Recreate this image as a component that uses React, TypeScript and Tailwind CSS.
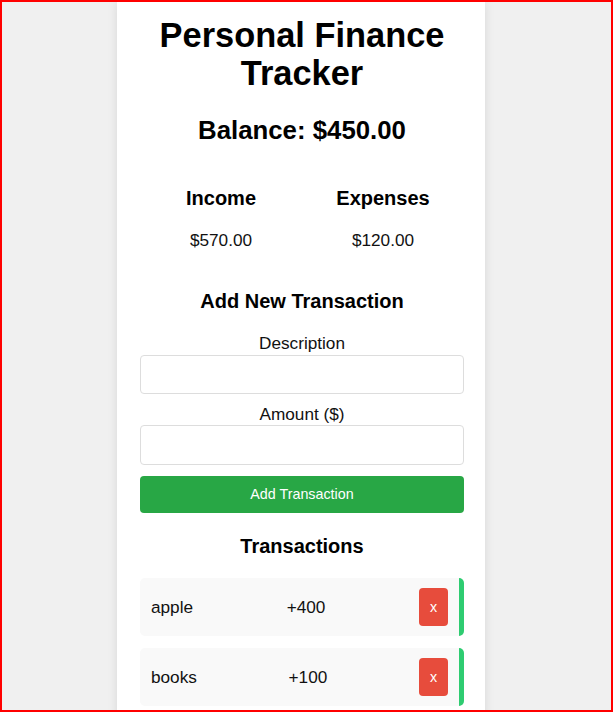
const transactions = [
  { id: 1, text: 'apple', amount: 400 },
  { id: 2, text: 'books', amount: 100 },
];

export default function App() {
  return (
    <div className="h-[712px] w-full overflow-hidden border-2 border-[#ff0000] bg-[#f0f0f0] font-['Liberation_Sans',Arial,sans-serif] text-[#111]">
      <div className="flex pl-[115px]">
        <div className="w-[368px] bg-white pt-[13.75px] pb-[20px] pl-[23px] pr-[21px] shadow-[0_0_10px_rgba(0,0,0,0.1)]">
          <h1 className="text-center text-[34.4px] leading-[38.5px] font-bold text-black">
            Personal Finance Tracker
          </h1>
          <h2 className="mt-[22.75px] text-center text-[25.8px] leading-[29.6px] font-bold text-black">
            Balance: $450.00
          </h2>

          <div className="mt-[42px] grid grid-cols-2 text-center">
            <div>
              <h3 className="text-[20px] leading-[23px] font-bold text-black">Income</h3>
              <p className="mt-[20.5px] text-[17.2px] leading-[19.8px]">$570.00</p>
            </div>
            <div>
              <h3 className="text-[20px] leading-[23px] font-bold text-black">Expenses</h3>
              <p className="mt-[20.5px] text-[17.2px] leading-[19.8px]">$120.00</p>
            </div>
          </div>

          <h3 className="mt-[40px] text-center text-[20px] leading-[23px] font-bold text-black">
            Add New Transaction
          </h3>
          <form onSubmit={(e) => e.preventDefault()}>
            <label className="mt-[20.5px] block text-center text-[17.2px] leading-[19.8px]">
              Description
            </label>
            <input
              type="text"
              className="mt-[1px] block h-[39.5px] w-full rounded-[4px] border border-[#ddd] px-2 text-[15px] outline-none"
            />
            <label className="mt-[10.5px] block text-center text-[17.2px] leading-[19.8px]">
              Amount ($)
            </label>
            <input
              type="number"
              className="mt-[1px] block h-[39.5px] w-full rounded-[4px] border border-[#ddd] px-2 text-[15px] outline-none"
            />
            <button className="mt-[11.5px] block h-[36.5px] w-full rounded-[4px] bg-[#28a745] text-[14.3px] text-white">
              Add Transaction
            </button>
          </form>

          <h3 className="mt-[22.5px] text-center text-[20px] leading-[23px] font-bold text-black">
            Transactions
          </h3>
          <ul className="mt-[20px] flex flex-col gap-[12px]">
            {transactions.map((t) => (
              <li
                key={t.id}
                className="flex h-[58px] items-center justify-between rounded-[5px] border-r-[5px] border-[#2ecc71] bg-[#f9f9f9] pl-[11px] pr-[11px] text-[17.2px]"
              >
                <span>{t.text}</span>
                <span>+{t.amount}</span>
                <button className="flex h-[38px] w-[29px] items-center justify-center rounded-[4px] bg-[#e74c3c] text-[14.3px] text-white">
                  x
                </button>
              </li>
            ))}
          </ul>
        </div>
      </div>
    </div>
  );
}
